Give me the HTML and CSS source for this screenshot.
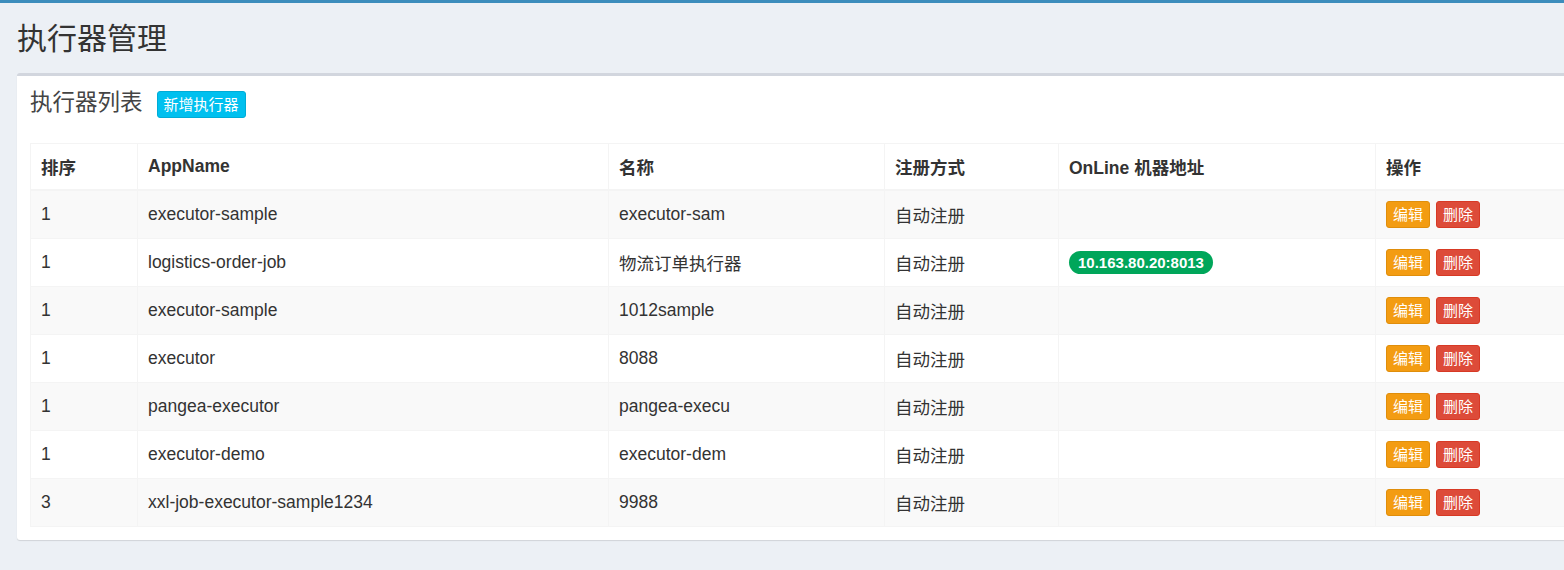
FILE: index.html
```html
<!DOCTYPE html>
<html lang="zh-CN">
<head>
<meta charset="utf-8">
<title>执行器管理</title>
<link rel="stylesheet" href="styles.css">
</head>
<body>
<div class="topbar"></div>
<section class="content-header">
  <h1>执行器管理</h1>
</section>
<section class="content">
  <div class="box">
    <div class="box-header">
      <h3 class="box-title">执行器列表</h3>
      <button class="btn btn-info">新增执行器</button>
    </div>
    <div class="box-body">
      <table class="grid">
        <colgroup>
          <col class="c1"><col class="c2"><col class="c3"><col class="c4"><col class="c5"><col class="c6">
        </colgroup>
        <thead>
          <tr><th>排序</th><th>AppName</th><th>名称</th><th>注册方式</th><th>OnLine 机器地址</th><th>操作</th></tr>
        </thead>
        <tbody>
          <tr><td>1</td><td>executor-sample</td><td>executor-sam</td><td>自动注册</td><td></td><td><div class="ops"><span class="btn btn-warning">编辑</span><span class="btn btn-danger">删除</span></div></td></tr>
          <tr><td>1</td><td>logistics-order-job</td><td>物流订单执行器</td><td>自动注册</td><td><span class="badge">10.163.80.20:8013</span></td><td><div class="ops"><span class="btn btn-warning">编辑</span><span class="btn btn-danger">删除</span></div></td></tr>
          <tr><td>1</td><td>executor-sample</td><td>1012sample</td><td>自动注册</td><td></td><td><div class="ops"><span class="btn btn-warning">编辑</span><span class="btn btn-danger">删除</span></div></td></tr>
          <tr><td>1</td><td>executor</td><td>8088</td><td>自动注册</td><td></td><td><div class="ops"><span class="btn btn-warning">编辑</span><span class="btn btn-danger">删除</span></div></td></tr>
          <tr><td>1</td><td>pangea-executor</td><td>pangea-execu</td><td>自动注册</td><td></td><td><div class="ops"><span class="btn btn-warning">编辑</span><span class="btn btn-danger">删除</span></div></td></tr>
          <tr><td>1</td><td>executor-demo</td><td>executor-dem</td><td>自动注册</td><td></td><td><div class="ops"><span class="btn btn-warning">编辑</span><span class="btn btn-danger">删除</span></div></td></tr>
          <tr><td>3</td><td>xxl-job-executor-sample1234</td><td>9988</td><td>自动注册</td><td></td><td><div class="ops"><span class="btn btn-warning">编辑</span><span class="btn btn-danger">删除</span></div></td></tr>
        </tbody>
      </table>
    </div>
  </div>
</section>
</body>
</html>
```
FILE: styles.css
```css
html, body {
  margin: 0;
  padding: 0;
  overflow: hidden;
}
body {
  background: #ecf0f5;
  color: #333;
  font-family: "Liberation Sans", "Noto Sans CJK SC", sans-serif;
  font-size: 17.5px;
  width: 1564px;
  height: 570px;
}
.topbar {
  height: 3px;
  background: #3c8dbc;
}
.content-header {
  padding: 18px 17px 0;
}
.content-header h1 {
  margin: 0;
  font-size: 30px;
  font-weight: normal;
  line-height: 36px;
  color: #333;
}
.content {
  padding: 16px 0 0 17px;
}
.box {
  width: 1640px;
  background: #fff;
  border-top: 3px solid #d2d6de;
  border-radius: 3px;
  box-shadow: 0 1px 1px rgba(0, 0, 0, 0.12);
}
.box-header {
  display: flex;
  align-items: center;
  gap: 14px;
  padding: 12px 13px 0;
  height: 30px;
}
.box-title {
  margin: 0;
  font-size: 22.5px;
  font-weight: normal;
  line-height: 26px;
  color: #444;
}
.btn {
  display: inline-block;
  font-family: "Liberation Sans", "Noto Sans CJK SC", sans-serif;
  font-size: 15px;
  line-height: 23px;
  padding: 1px 6px;
  border: 1px solid transparent;
  border-radius: 3px;
  color: #fff;
  white-space: nowrap;
}
.btn-info {
  background: #00c0ef;
  border-color: #00acd6;
  margin-top: 2px;
}
.btn-warning {
  background: #f39c12;
  border-color: #e08e0b;
}
.btn-danger {
  background: #dd4b39;
  border-color: #d73925;
}
.box-body {
  padding: 25px 13px 13px;
}
.grid {
  border-collapse: collapse;
  table-layout: fixed;
  width: 1645px;
  border: 1px solid #f4f4f4;
}
.c1 { width: 107px; }
.c2 { width: 471px; }
.c3 { width: 276px; }
.c4 { width: 174px; }
.c5 { width: 317px; }
.c6 { width: 300px; }
.grid th, .grid td {
  border: 1px solid #f4f4f4;
  padding: 0 10px;
  text-align: left;
  vertical-align: middle;
  white-space: nowrap;
}
.grid th {
  height: 45px;
  font-weight: bold;
  border-bottom-width: 2px;
}
.grid td {
  height: 47px;
}
.grid tbody tr:nth-child(odd) {
  background: #f9f9f9;
}
.ops {
  display: flex;
  align-items: center;
  gap: 6px;
  height: 25px;
}
.badge {
  display: inline-block;
  background: #00a65a;
  color: #fff;
  font-weight: bold;
  font-size: 15px;
  line-height: 15px;
  padding: 4px 9px;
  border-radius: 12px;
}
```
